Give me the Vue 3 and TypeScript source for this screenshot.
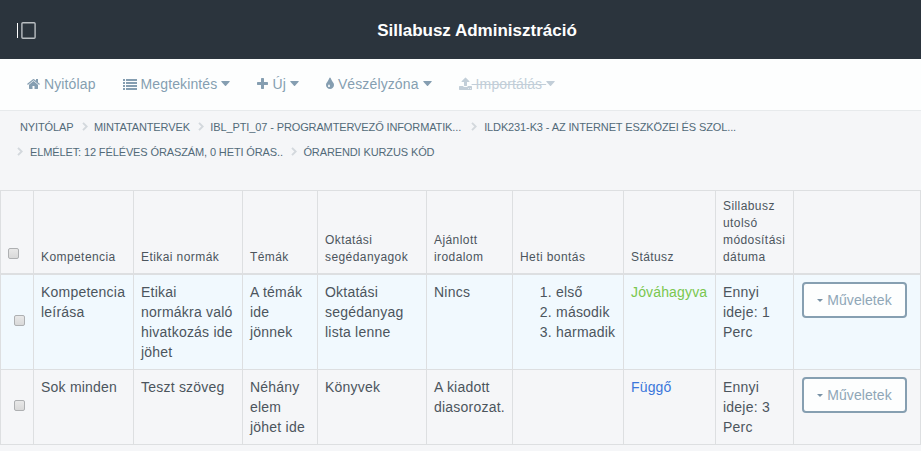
<script setup lang="ts">
import { ref } from 'vue'

interface MenuItem {
  icon: 'home' | 'list' | 'plus' | 'tint' | 'upload'
  label: string
  caret: boolean
  disabled?: boolean
}

interface Syllabus {
  competence: string
  ethics: string
  topics: string
  materials: string
  literature: string
  weekly: string[]
  status: string
  approved: boolean
  modified: string
}

const menu: MenuItem[] = [
  { icon: 'home', label: 'Nyitólap', caret: false },
  { icon: 'list', label: 'Megtekintés', caret: true },
  { icon: 'plus', label: 'Új', caret: true },
  { icon: 'tint', label: 'Vészélyzóna', caret: true },
  { icon: 'upload', label: 'Importálás', caret: true, disabled: true },
]

const icons = {
  home: { box: '64 0 1664 1792', path: 'M1472 992v480q0 26-19 45t-45 19h-384v-384h-256v384h-384q-26 0-45-19t-19-45v-480q0-1 .5-3t.5-3l575-474 575 474q1 2 1 6zm223-69l-62 74q-8 9-21 11h-3q-13 0-21-7l-692-577-692 577q-12 8-24 7-13-2-21-11l-62-74q-8-10-7-23.5t11-21.5l719-599q32-26 76-26t76 26l244 204v-195q0-14 9-23t23-9h192q14 0 23 9t9 23v408l219 182q10 8 11 21.5t-7 23.5z' },
  list: { box: '0 0 1792 1792', path: 'M0 256h256v256h-256zM384 256h1408v256h-1408zM0 640h256v256h-256zM384 640h1408v256h-1408zM0 1024h256v256h-256zM384 1024h1408v256h-1408zM0 1408h256v256h-256zM384 1408h1408v256h-1408z' },
  plus: { box: '192 0 1408 1792', path: 'M1600 736v192q0 40-28 68t-68 28h-416v416q0 40-28 68t-68 28h-192q-40 0-68-28t-28-68v-416h-416q-40 0-68-28t-28-68v-192q0-40 28-68t68-28h416v-416q0-40 28-68t68-28h192q40 0 68 28t28 68v416h416q40 0 68 28t28 68z' },
  tint: { box: '384 0 1024 1792', path: 'M896 1152q0-36-20-69-1-1-15.5-22.5t-25.5-38-25-44-21-50.5q-4-16-21-16t-21 16q-7 23-21 50.5t-25 44-25.5 38-15.5 22.5q-20 33-20 69 0 53 37.5 90.5t90.5 37.5 90.5-37.5 37.5-90.5zm512-128q0 212-150 362t-362 150-362-150-150-362q0-145 81-275 6-9 62.5-90.5t101-151 99.5-178 83-201.5q9-30 34-47t51-17 51.5 17 33.5 47q28 93 83 201.5t99.5 178 101 151 62.5 90.5q81 127 81 275z' },
  upload: { box: '64 0 1664 1792', path: 'M1344 1472q0-26-19-45t-45-19-45 19-19 45 19 45 45 19 45-19 19-45zm256 0q0-26-19-45t-45-19-45 19-19 45 19 45 45 19 45-19 19-45zm128-224v320q0 40-28 68t-68 28h-1472q-40 0-68-28t-28-68v-320q0-40 28-68t68-28h427q21 56 70.5 92t110.5 36h256q61 0 110.5-36t70.5-92h427q40 0 68 28t28 68zm-325-648q-17 40-59 40h-256v448q0 26-19 45t-45 19h-256q-26 0-45-19t-19-45v-448h-256q-42 0-59-40-17-39 14-69l448-448q18-19 45-19t45 19l448 448q31 30 14 69z' },
}

const crumbRows: string[][] = [
  ['NYITÓLAP', 'MINTATANTERVEK', 'IBL_PTI_07 - PROGRAMTERVEZŐ INFORMATIK...', 'ILDK231-K3 - AZ INTERNET ESZKÖZEI ÉS SZOL...'],
  ['ELMÉLET: 12 FÉLÉVES ÓRASZÁM, 0 HETI ÓRAS..', 'ÓRARENDI KURZUS KÓD'],
]

const headers = ['Kompetencia', 'Etikai normák', 'Témák', 'Oktatási segédanyagok', 'Ajánlott irodalom', 'Heti bontás', 'Státusz', 'Sillabusz utolsó módosítási dátuma', '']

const rows: Syllabus[] = [
  {
    competence: 'Kompetencia leírása',
    ethics: 'Etikai normákra való hivatkozás ide jöhet',
    topics: 'A témák ide jönnek',
    materials: 'Oktatási segédanyag lista lenne',
    literature: 'Nincs',
    weekly: ['első', 'második', 'harmadik'],
    status: 'Jóváhagyva',
    approved: true,
    modified: 'Ennyi ideje: 1 Perc',
  },
  {
    competence: 'Sok minden',
    ethics: 'Teszt szöveg',
    topics: 'Néhány elem jöhet ide',
    materials: 'Könyvek',
    literature: 'A kiadott diasorozat.',
    weekly: [],
    status: 'Függő',
    approved: false,
    modified: 'Ennyi ideje: 3 Perc',
  },
]

const selected = ref<boolean[]>(rows.map(() => false))
const allSelected = ref(false)

function toggleAll() {
  selected.value = rows.map(() => allSelected.value)
}
</script>

<template>
  <div class="page">
    <header class="topbar">
      <svg class="drawer" width="20" height="18" viewBox="0 0 20 18">
        <path d="M.5 1v15" stroke="#fff" fill="none" />
        <rect x="4.9" y=".7" width="13.2" height="15.6" rx="1" stroke="#b9bec2" stroke-width="1.4" fill="none" />
      </svg>
      <h1>Sillabusz Adminisztráció</h1>
    </header>

    <nav class="menu">
      <a v-for="item in menu" :key="item.label" class="menu-item" :class="{ disabled: item.disabled }">
        <svg class="icon" :viewBox="icons[item.icon].box"><path :d="icons[item.icon].path" /></svg>
        <span class="label">{{ ` ${item.label}${item.caret ? ' ' : ''}` }}</span>
        <svg v-if="item.caret" class="caret" viewBox="0 0 9 5"><path d="M.6 0h7.8q.6.3.2.8L5 4.7q-.5.4-1 0L.4.8Q0 .3.6 0z" /></svg>
      </a>
    </nav>

    <div class="crumbs">
      <div v-for="(line, l) in crumbRows" :key="l" class="crumb-line">
        <template v-for="(crumb, c) in line" :key="crumb">
          <svg v-if="l > 0 || c > 0" class="sep" :class="{ first: c === 0, wide: c === 3 }" viewBox="0 0 6 9"><path d="M1 .8l3.7 3.7L1 8.2" /></svg>
          <span class="crumb">{{ crumb }}</span>
        </template>
      </div>
    </div>

    <table class="grid">
      <colgroup>
        <col v-for="n in 10" :key="n" :class="`col-${n}`" />
      </colgroup>
      <thead>
        <tr>
          <th class="check"><input v-model="allSelected" type="checkbox" @change="toggleAll" /></th>
          <th v-for="head in headers" :key="head">{{ head }}</th>
        </tr>
      </thead>
      <tbody>
        <tr v-for="(row, i) in rows" :key="row.competence">
          <td class="check"><input v-model="selected[i]" type="checkbox" /></td>
          <td>{{ row.competence }}</td>
          <td>{{ row.ethics }}</td>
          <td>{{ row.topics }}</td>
          <td>{{ row.materials }}</td>
          <td>{{ row.literature }}</td>
          <td><ol v-if="row.weekly.length"><li v-for="w in row.weekly" :key="w">{{ w }}</li></ol></td>
          <td class="status" :class="row.approved ? 'approved' : 'pending'">{{ row.status }}</td>
          <td>{{ row.modified }}</td>
          <td class="actions">
            <button type="button">
              <svg viewBox="0 0 6 3"><path d="M0 0h6L3 3z" /></svg>Műveletek
            </button>
          </td>
        </tr>
      </tbody>
    </table>
  </div>
</template>

<style>
body {
  background: #f5f6f8;
}
</style>

<style scoped>
.page {
  width: 921px;
  height: 451px;
  overflow: hidden;
  font-family: "Liberation Sans", Arial, sans-serif;
  font-size: 14px;
  line-height: 20px;
  color: #4c555d;
  background: #f5f6f8;
}
.topbar {
  display: grid;
  grid-template-columns: 17px 1fr 17px;
  align-items: center;
  height: 59px;
  background: #2b343d;
}
.drawer {
  grid-column: 2;
  grid-row: 1;
  margin-top: 3px;
}
h1 {
  grid-column: 1 / 4;
  grid-row: 1;
  margin: 2px 0 0 33px;
  font-size: 17px;
  line-height: 24px;
  text-align: center;
  color: #fff;
}
.menu {
  box-sizing: border-box;
  display: flex;
  gap: 27px;
  height: 52px;
  padding: 0 27px 2px;
  background: #fdfefe;
  border-bottom: 1px solid #e7eaec;
}
.menu-item {
  display: flex;
  align-items: center;
  letter-spacing: 0.12px;
  color: #859eb1;
}
.icon {
  height: 14px;
  fill: currentColor;
}
.label {
  white-space: pre;
}
.caret {
  width: 9px;
  height: 5px;
  fill: currentColor;
}
.disabled {
  color: #c2ced8;
}
.disabled .label {
  text-decoration: line-through;
}
.crumbs {
  box-sizing: border-box;
  height: 79px;
  padding: 3px 20px 0;
  font-size: 11px;
  letter-spacing: -0.12px;
  color: #526a78;
}
.crumb-line {
  display: flex;
  align-items: center;
  height: 25px;
}
.crumb {
  white-space: pre;
}
.sep {
  width: 6px;
  height: 9px;
  margin: 0 6px 0 8.5px;
  fill: none;
  stroke: #d3d8dd;
  stroke-width: 1.9;
}
.sep.wide {
  margin: 0 7px 0 10px;
}
.sep.first {
  margin: 0 7px 0 -3px;
}
.grid {
  width: 921px;
  table-layout: fixed;
  border-collapse: separate;
  border-spacing: 0;
  border-top: 1px solid #dddfe1;
  border-left: 1px solid #dddfe1;
}
.col-1 { width: 33px; }
.col-2 { width: 100px; }
.col-3 { width: 109px; }
.col-4 { width: 75px; }
.col-5 { width: 109px; }
.col-6 { width: 86px; }
.col-7 { width: 111px; }
.col-8 { width: 92px; }
.col-9 { width: 78px; }
.col-10 { width: 127px; }
th {
  box-sizing: border-box;
  height: 84px;
  padding: 0 0 7px 7px;
  font-size: 12px;
  font-weight: 400;
  line-height: 17px;
  letter-spacing: 0.42px;
  text-align: left;
  vertical-align: bottom;
  border-right: 1px solid #dddfe1;
  border-bottom: 2px solid #dddfe1;
}
td {
  box-sizing: border-box;
  padding: 7px 6px 7px 7px;
  letter-spacing: 0.22px;
  vertical-align: top;
  border-right: 1px solid #dddfe1;
  border-bottom: 1px solid #dddfe1;
}
tbody tr:first-child {
  background: #f1f9fe;
}
td.check {
  padding: 0 0 0 13px;
  vertical-align: middle;
}
th.check {
  padding: 0 0 14px 7px;
}
input {
  display: block;
  appearance: none;
  box-sizing: border-box;
  width: 11px;
  height: 11px;
  margin: 0;
  background: linear-gradient(#e8e8e8, #d9d9d9);
  border: 1px solid #aeb0b2;
  border-radius: 2px;
}
td.check input {
  margin-top: -3px;
}
tbody tr:first-child td.check input {
  margin-top: -4px;
}
ol {
  margin: 0 -6px 0 0;
  padding-left: 36px;
}
.status {
  letter-spacing: 0.15px;
}
.approved {
  color: #7ac74f;
}
.pending {
  color: #3b76db;
}
td.actions {
  padding: 7px 0 0 8px;
}
button {
  display: flex;
  align-items: center;
  justify-content: center;
  box-sizing: border-box;
  width: 105px;
  height: 36px;
  padding: 0;
  font: inherit;
  letter-spacing: 0.1px;
  color: #8fa6b7;
  background: #fdfefe;
  border: 2px solid #869fb1;
  border-radius: 4px;
}
button svg {
  width: 6px;
  height: 3px;
  margin-right: 4px;
  fill: #7891a5;
}
</style>
